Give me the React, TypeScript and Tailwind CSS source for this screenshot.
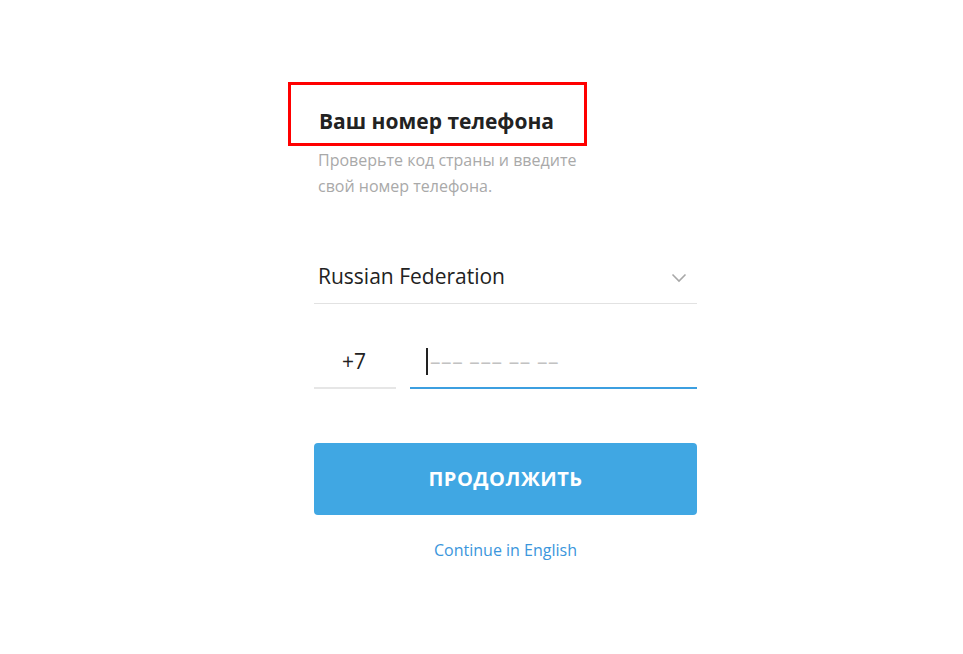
import React from "react";

function Chevron() {
  return (
    <svg width="16" height="10" viewBox="0 0 16 10" fill="none">
      <path d="M1.5 1.5 L8 8 L14.5 1.5" stroke="#a8a8a8" strokeWidth="1.6" />
    </svg>
  );
}

export default function App() {
  return (
    <div className="min-h-[654px] w-full bg-white flex justify-center" style={{ fontFamily: '"Open Sans", "Liberation Sans", sans-serif' }}>
      <div className="w-[383px] ml-[48px] pt-[109px]">
        {/* heading */}
        <div className="relative pl-[5px]">
          <h1 className="text-[21px] leading-[24px] font-bold text-[#222222]">Ваш номер телефона</h1>
          <div className="absolute left-[-26px] top-[-27px] w-[299px] h-[64px] border-[3px] border-[#ff0000]" />
        </div>
        <p className="pl-[4px] mt-[14px] w-[290px] text-[16px] leading-[26px] text-[#a9a9a9]">
          Проверьте код страны и введите свой номер телефона.
        </p>

        {/* country */}
        <div className="mt-[56px] flex items-center justify-between border-b border-[#e2e2e2] pl-[4px] pr-[10px] pt-[3px] pb-[9px]">
          <span className="text-[21px] leading-[36px] text-[#222222]">Russian Federation</span>
          <span className="mt-[4px]"><Chevron /></span>
        </div>

        {/* phone */}
        <div className="mt-[30px] flex gap-[14px]">
          <div className="w-[82px] h-[55px] flex items-center justify-center border-b-2 border-[#e6e6e6] pt-[2px] pr-[2px]">
            <span className="text-[21px] text-[#222222]">+7</span>
          </div>
          <div className="flex-1 h-[55px] flex items-center border-b-2 border-[#3c9fe0] pl-[16px] pt-[2px]">
            <div className="w-[2px] h-[27px] bg-[#222222]" />
            <span className="ml-[2px] text-[21px] text-[#c2c2c2] tracking-[0.6px]">––– ––– –– ––</span>
          </div>
        </div>

        {/* button */}
        <button className="mt-[54px] w-full h-[72px] rounded-[4px] bg-[#40a7e3] text-white text-[20px] font-bold tracking-[0.5px]">
          ПРОДОЛЖИТЬ
        </button>

        <div className="mt-[25px] text-center text-[16px] leading-[20px] text-[#3b96dc]">
          Continue in English
        </div>
      </div>
    </div>
  );
}
